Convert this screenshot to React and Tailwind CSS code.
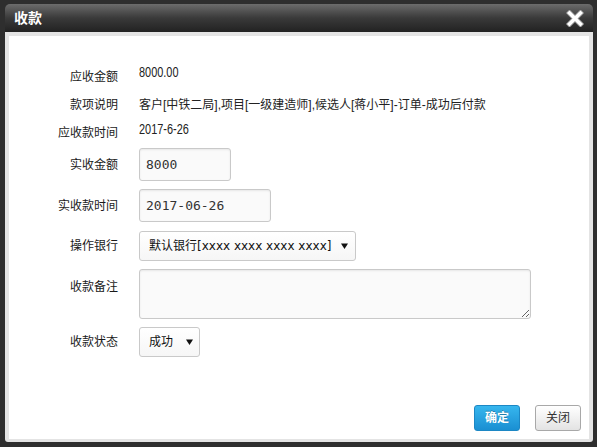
import React from 'react'

const cjk = { fontFamily: '"Liberation Sans", "Noto Sans CJK SC", sans-serif' }
const mono = { fontFamily: '"DejaVu Sans Mono", "Noto Sans CJK SC", monospace' }
const wide = { fontFamily: '"DejaVu Sans", "Noto Sans CJK SC", sans-serif' }

const Arrow = () => (
  <svg width="7" height="6" viewBox="0 0 7 6" className="shrink-0">
    <path d="M0 0.5 H7 L3.5 6 Z" fill="#111" />
  </svg>
)

const CloseIcon = () => (
  <svg width="18" height="17" viewBox="0 0 18 17">
    <g strokeLinecap="square">
      <path d="M3.5 3 L14.5 14 M14.5 3 L3.5 14" stroke="#8a8a8a" strokeWidth="5.4" />
      <path d="M3.5 3 L14.5 14 M14.5 3 L3.5 14" stroke="#fff" strokeWidth="3.6" />
    </g>
  </svg>
)

const Row = ({ label, children, className = '', labelClass = '' }) => (
  <div className={`flex items-center ${className}`}>
    <div className={`w-[109px] shrink-0 text-right text-[12px] text-[#1a1a1a] ${labelClass}`}>{label}</div>
    <div className="ml-[21px] flex items-center">{children}</div>
  </div>
)

// narrow digits, as in the reference
const Num = ({ children, className = '' }) => (
  <span className={`inline-block origin-left scale-x-[0.78] text-[14px] text-[#222] ${className}`}>{children}</span>
)

const boxCls = 'border border-[#c9c9c9] rounded-[3px] bg-[#fafafa] shadow-[inset_0_1px_2px_rgba(0,0,0,0.08)] outline-none'

export default function App() {
  return (
    <div className="w-[597px] h-[447px] bg-[#2e2e2e] pt-[4px] pl-[5px] pr-[4px] pb-[5px]" style={cjk}>
      <div className="h-full flex flex-col rounded-t-[5px] rounded-b-[3px] overflow-hidden">
        {/* Title */}
        <div className="h-[28px] shrink-0 flex items-center justify-between pl-[9px] pr-[9px] bg-gradient-to-b from-[#6c6c6c] via-[#3a3a3a] to-[#222]">
          <span className="text-[14px] font-bold text-white">收款</span>
          <CloseIcon />
        </div>

        {/* Body */}
        <div className="flex-1 bg-[#e4e4e4] px-[4px] pt-[4px] pb-[3px] flex">
          <div className="flex-1 bg-white flex flex-col pt-[27px]">
            <Row label="应收金额" className="h-[28px]">
              <Num className="mb-[9px]">8000.00</Num>
            </Row>
            <Row label="款项说明" className="h-[28px]">
              <span className="text-[12px] text-[#222]">客户[中铁二局],项目[一级建造师],候选人[蒋小平]-订单-成功后付款</span>
            </Row>
            <Row label="应收款时间" className="h-[28px]">
              <Num className="mb-[8px]">2017-6-26</Num>
            </Row>

            <div className="flex flex-col gap-[8px] mt-[1px]">
              <Row label="实收金额">
                <input
                  readOnly
                  value="8000"
                  className={`${boxCls} w-[92px] h-[33px] px-[6px] text-[13px] text-[#333]`}
                  style={mono}
                />
              </Row>
              <Row label="实收款时间">
                <input
                  readOnly
                  value="2017-06-26"
                  className={`${boxCls} w-[132px] h-[33px] px-[6px] text-[13px] text-[#333]`}
                  style={mono}
                />
              </Row>
              <Row label="操作银行" className="mt-[1px]">
                <div className="w-[217px] h-[30px] border border-[#c9c9c9] rounded-[3px] bg-gradient-to-b from-white to-[#f6f6f6] flex items-center justify-between pl-[9px] pr-[7px]">
                  <span className="text-[12px] text-[#111]" style={wide}>默认银行[xxxx xxxx xxxx xxxx]</span>
                  <Arrow />
                </div>
              </Row>
              <Row label="收款备注" className="!items-start" labelClass="pt-[9px]">
                <textarea
                  readOnly
                  className={`${boxCls} w-[392px] h-[50px] block`}
                />
              </Row>
              <Row label="收款状态">
                <div className="w-[61px] h-[30px] border border-[#c9c9c9] rounded-[3px] bg-gradient-to-b from-white to-[#f6f6f6] flex items-center justify-between pl-[9px] pr-[6px]">
                  <span className="text-[12px] text-[#111]">成功</span>
                  <Arrow />
                </div>
              </Row>
            </div>

            <div className="mt-auto flex justify-end gap-[15px] pr-[8px] pb-[8px]">
              <button className="w-[46px] h-[26px] rounded-[3px] border border-[#1c87c4] bg-gradient-to-b from-[#36b6ee] to-[#1a8fd2] text-white text-[12px] font-bold [text-shadow:0_-1px_0_rgba(0,0,0,0.25)]">
                确定
              </button>
              <button className="w-[46px] h-[26px] rounded-[3px] border border-[#a8a8a8] bg-gradient-to-b from-white to-[#e3e3e3] text-[#333] text-[12px]">
                关闭
              </button>
            </div>
          </div>
        </div>
      </div>
    </div>
  )
}
